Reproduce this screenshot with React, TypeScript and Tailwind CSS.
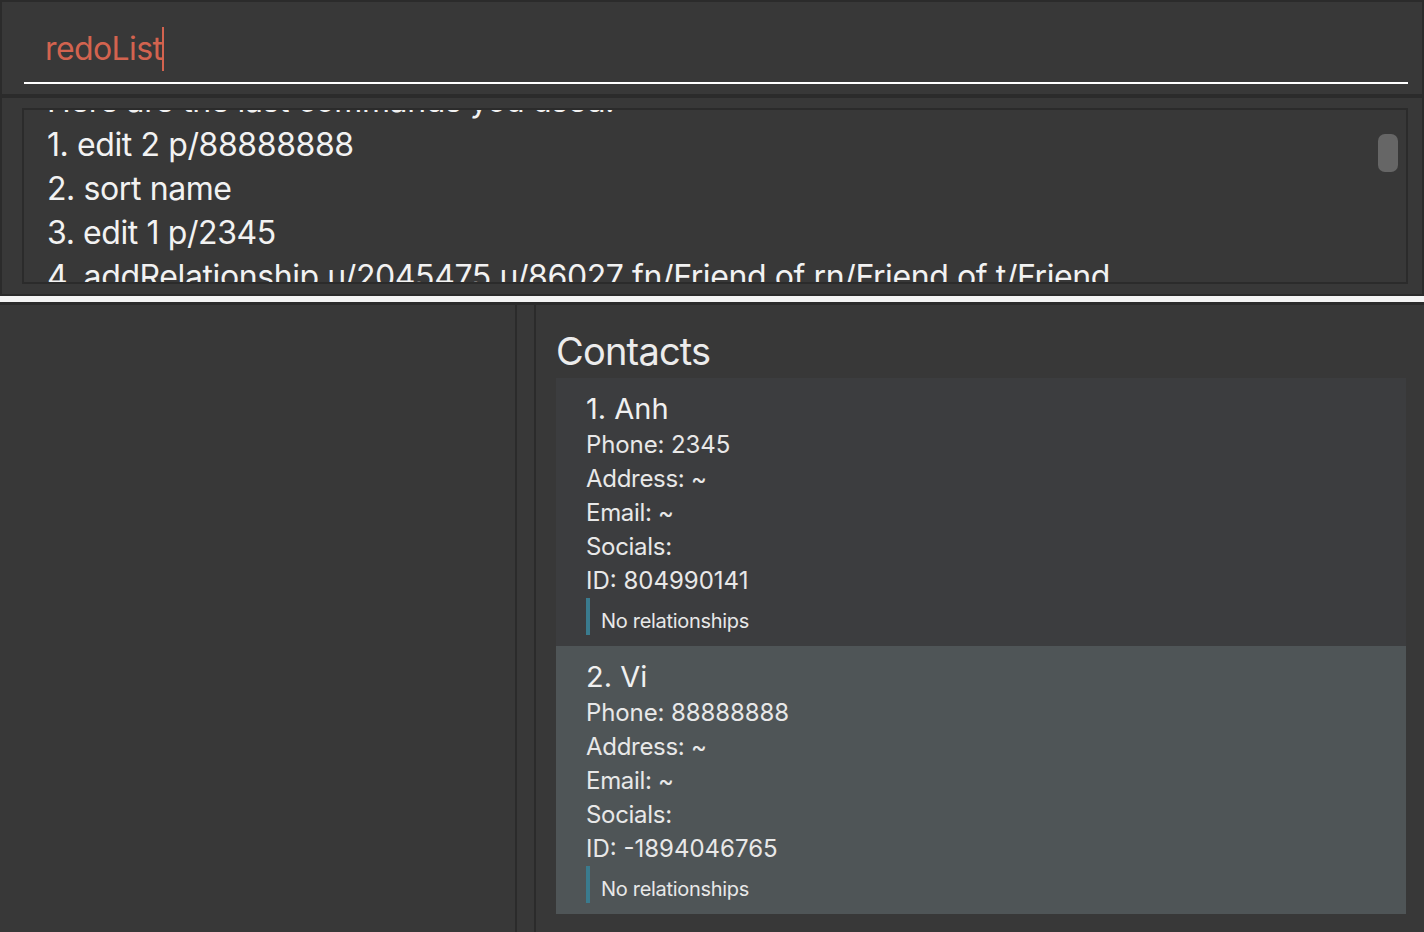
import React from "react";

const font = { fontFamily: "Inter, 'Noto Sans', sans-serif" };

function Card({ idx, name, phone, id, selected }: { idx: number; name: string; phone: string; id: string; selected?: boolean }) {
  return (
    <div className={`${selected ? "bg-[#4f5557]" : "bg-[#3c3d3f]"} pl-[30px] pt-[12px] pb-[11px] text-[#e8e8e8]`}>
      <div className="text-[29px] leading-[38px] text-[#f0f0f0]">{idx}. {name}</div>
      <div className="text-[24px] leading-[34px] tracking-[-0.1px]">Phone: {phone}</div>
      <div className="text-[24px] leading-[34px] tracking-[-0.3px]">Address: ~</div>
      <div className="text-[24px] leading-[34px] tracking-[-0.3px]">Email: ~</div>
      <div className="text-[24px] leading-[34px] tracking-[-0.3px]">Socials:</div>
      <div className="text-[24px] leading-[34px] tracking-[0px]">ID: {id}</div>
      <div className="border-l-[4px] border-[#3a7b8e] pl-[11px] h-[37px] flex items-end pb-[1px] text-[20px] leading-[26px] tracking-[-0.3px]">No relationships</div>
    </div>
  );
}

export default function App() {
  return (
    <div className="w-[1424px] h-[932px] bg-[#2b2b2b] flex flex-col overflow-hidden" style={font}>
      {/* command box */}
      <div className="mt-[2px] mx-[2px] h-[92px] bg-[#383838] pl-[22px] pr-[14px] pt-[22px]">
        <div className="border-b-[2px] border-white h-[60px] flex items-start">
          <div className="pl-[21px] text-[32px] leading-[50px] text-[#d3634f] tracking-[-0.6px] flex items-center">
            <span>redoList</span>
            <span className="inline-block w-[2px] h-[44px] bg-[#d3634f] ml-[0px]" />
          </div>
        </div>
      </div>
      {/* result display */}
      <div className="mt-[4px] mx-[2px] h-[196px] bg-[#383838] pl-[20px] pr-[14px] pt-[10px]">
        <div className="relative h-[176px] border-[2px] border-[#2b2b2b] overflow-hidden">
          <div className="-mt-[31px] pl-[23px] text-[32px] leading-[44px] text-[#f2f2f2] tracking-[-0.4px] whitespace-nowrap">
            <div>Here are the last commands you used:</div>
            <div>1. edit 2 p/88888888</div>
            <div>2. sort name</div>
            <div>3. edit 1 p/2345</div>
            <div>4. addRelationship u/2045475 u/86027 fn/Friend of rn/Friend of t/Friend</div>
          </div>
          <div className="absolute right-[8px] top-[24px] w-[20px] h-[38px] rounded-[7px] bg-[#666666]" />
        </div>
      </div>
      <div className="h-[2px]" />
      <div className="h-[6px] bg-[#f4f4f4]" />
      <div className="h-[3px]" />
      {/* bottom */}
      <div className="flex flex-1 min-h-0">
        <div className="w-[515px] bg-[#383838]" />
        <div className="w-[2px]" />
        <div className="w-[17px] bg-[#383838]" />
        <div className="w-[2px]" />
        <div className="flex-1 bg-[#383838] pl-[20px] pr-[18px] flex flex-col">
          <div className="h-[73px] flex items-end pb-[2px] text-[38px] leading-[50px] text-[#ececec] tracking-[-0.8px]">Contacts</div>
          <Card idx={1} name="Anh" phone="2345" id="804990141" />
          <Card idx={2} name="Vi" phone="88888888" id="-1894046765" selected />
        </div>
      </div>
    </div>
  );
}
